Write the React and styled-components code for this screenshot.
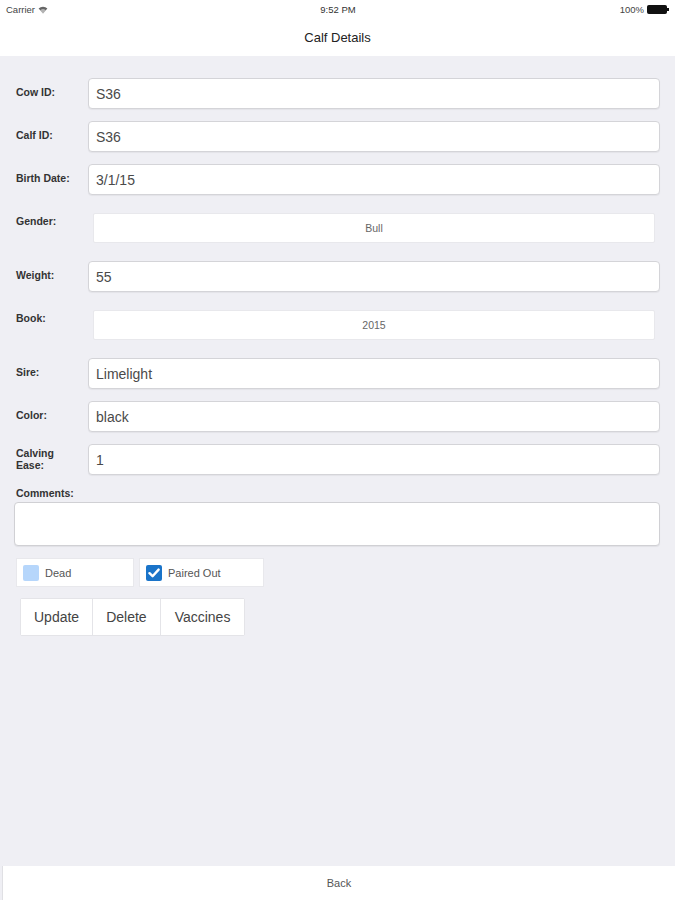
import React from 'react';
import styled, { createGlobalStyle } from 'styled-components';

const GlobalStyle = createGlobalStyle`
    html, body {
        margin: 0;
        padding: 0;
        background: #efeff4;
        font-family: "Liberation Sans", Arial, sans-serif;
    }
`

const fields = [
    { label: 'Cow ID:', value: 'S36' },
    { label: 'Calf ID:', value: 'S36' },
    { label: 'Birth Date:', value: '3/1/15' },
    { label: 'Gender:', value: 'Bull', picker: true },
    { label: 'Weight:', value: '55' },
    { label: 'Book:', value: '2015', picker: true },
    { label: 'Sire:', value: 'Limelight' },
    { label: 'Color:', value: 'black' },
    { label: 'Calving Ease:', value: '1', narrow: true },
]

function WifiIcon() {
    return (
        <svg width="10" height="8" viewBox="0 0 10 8">
            <path d="M5 7.6 L0.6 2.6 A6.4 6.4 0 0 1 9.4 2.6 Z" fill="#666" />
            <path d="M5 7.6 L2.2 4.4 A4 4 0 0 1 7.8 4.4 Z" fill="#fff" opacity="0.5" />
        </svg>
    )
}

function Battery() {
    return (
        <svg width="23" height="9" viewBox="0 0 23 9">
            <rect x="0.5" y="0.5" width="19" height="8" rx="1" fill="#111" stroke="#111" />
            <rect x="20" y="3" width="2" height="3" fill="#111" />
        </svg>
    )
}

function Checkbox({ checked, label, width }) {
    return (
        <CheckItem width={width}>
            <Box checked={checked}>
                {checked && (
                    <svg width="12" height="10" viewBox="0 0 12 10">
                        <path d="M1.5 5.2 L4.6 8.2 L10.6 1.6" fill="none" stroke="#fff" strokeWidth="2.4" strokeLinecap="round" strokeLinejoin="round" />
                    </svg>
                )}
            </Box>
            {label}
        </CheckItem>
    )
}

export default function App() {
    return (
        <Page>
            <GlobalStyle />
            <Header>
                <StatusBar>
                    <StatusSide>Carrier <WifiIcon /></StatusSide>
                    <StatusTime>9:52 PM</StatusTime>
                    <StatusSide right>100% <Battery /></StatusSide>
                </StatusBar>
                <NavBar>Calf Details</NavBar>
            </Header>
            <Main>
                {fields.map(f => (
                    <FieldRow key={f.label} picker={f.picker}>
                        <Label narrow={f.narrow} picker={f.picker}>{f.label}</Label>
                        {f.picker
                            ? <Picker>{f.value}</Picker>
                            : <Input>{f.value}</Input>}
                    </FieldRow>
                ))}
                <CommentsBlock>
                    <Label flush>Comments:</Label>
                    <TextArea />
                </CommentsBlock>
                <CheckRow>
                    <Checkbox label="Dead" width={118} />
                    <Checkbox checked label="Paired Out" width={125} />
                </CheckRow>
                <ButtonGroup>
                    <ActionButton>Update</ActionButton>
                    <ActionButton>Delete</ActionButton>
                    <ActionButton>Vaccines</ActionButton>
                </ButtonGroup>
            </Main>
            <Footer>
                <BackButton>Back</BackButton>
            </Footer>
        </Page>
    )
}

const Page = styled.div`
    display: flex;
    flex-direction: column;
    height: 100vh;
    background: #efeff4;
`

const Header = styled.header`
    background: #fff;
`

const StatusBar = styled.div`
    height: 19px;
    display: grid;
    grid-template-columns: 1fr auto 1fr;
    align-items: center;
    padding: 0 5px 0 6px;
    font-size: 9.5px;
    color: #444;
`

const StatusSide = styled.div`
    display: flex;
    align-items: center;
    gap: 3px;
    justify-content: ${p => p.right ? 'flex-end' : 'flex-start'};
`

const StatusTime = styled.div`
    font-size: 9.5px;
    color: #333;
`

const NavBar = styled.div`
    height: 37px;
    display: flex;
    align-items: center;
    justify-content: center;
    font-size: 13px;
    color: #222;
`

const Main = styled.main`
    flex: 1;
    display: flex;
    flex-direction: column;
    gap: 12px;
    padding: 22px 15px 0 14px;
`

const FieldRow = styled.div`
    display: flex;
    align-items: flex-start;
    padding: ${p => p.picker ? '6px 0 6px' : '0'};
`

const Label = styled.div`
    width: 74px;
    flex-shrink: 0;
    padding: ${p => p.flush ? '0 0 0 2px'
        : p.narrow ? '3px 24px 0 2px'
        : p.picker ? '2px 0 0 2px'
        : '8px 0 0 2px'};
    box-sizing: border-box;
    font-size: 10.5px;
    font-weight: bold;
    line-height: 12px;
    color: #333;
`

const Input = styled.div`
    flex: 1;
    height: 31px;
    box-sizing: border-box;
    display: flex;
    align-items: center;
    padding: 0 7px;
    background: #fff;
    border: 1px solid #d4d4d8;
    border-radius: 4px;
    box-shadow: 0 1px 1px rgba(0, 0, 0, 0.05);
    font-size: 14px;
    color: #4a4a4a;
`

const Picker = styled.div`
    flex: 1;
    height: 30px;
    box-sizing: border-box;
    margin: 0 5px;
    display: flex;
    align-items: center;
    justify-content: center;
    background: #fff;
    border: 1px solid #e8e8ec;
    border-radius: 2px;
    font-size: 10.5px;
    color: #666;
`

const CommentsBlock = styled.div`
    display: flex;
    flex-direction: column;
    gap: 3px;
`

const TextArea = styled.div`
    height: 44px;
    box-sizing: border-box;
    background: #fff;
    border: 1px solid #d0d0d4;
    border-radius: 4px;
    box-shadow: 0 1px 1px rgba(0, 0, 0, 0.06);
`

const CheckRow = styled.div`
    display: flex;
    gap: 5px;
    padding-left: 2px;
`

const CheckItem = styled.div`
    width: ${p => p.width}px;
    height: 29px;
    box-sizing: border-box;
    display: flex;
    align-items: center;
    gap: 6px;
    padding: 0 0 0 6px;
    background: #fff;
    border: 1px solid #e8e8ec;
    font-size: 11px;
    color: #555;
`

const Box = styled.span`
    width: 16px;
    height: 16px;
    border-radius: 2px;
    display: flex;
    align-items: center;
    justify-content: center;
    background: ${p => p.checked ? '#1a74c9' : '#b6d6fb'};
`

const ButtonGroup = styled.div`
    display: flex;
    align-self: flex-start;
    margin-left: 6px;
    margin-top: -1px;
    background: #fff;
    border: 1px solid #e4e4e8;
    border-radius: 2px;
`

const ActionButton = styled.button`
    height: 36px;
    padding: 0 13px;
    background: #fff;
    border: none;
    border-left: 1px solid #e4e4e8;
    font-family: "Liberation Sans", Arial, sans-serif;
    font-size: 14px;
    color: #444;

    &:first-child {
        border-left: none;
    }

    &:last-child {
        padding: 0 14px;
    }
`

const Footer = styled.footer`
    height: 34px;
    display: flex;
    padding-left: 2px;
`

const BackButton = styled.button`
    flex: 1;
    background: #fff;
    border: none;
    border-left: 1px solid #e0e0e4;
    font-family: "Liberation Sans", Arial, sans-serif;
    font-size: 11px;
    color: #555;
`
